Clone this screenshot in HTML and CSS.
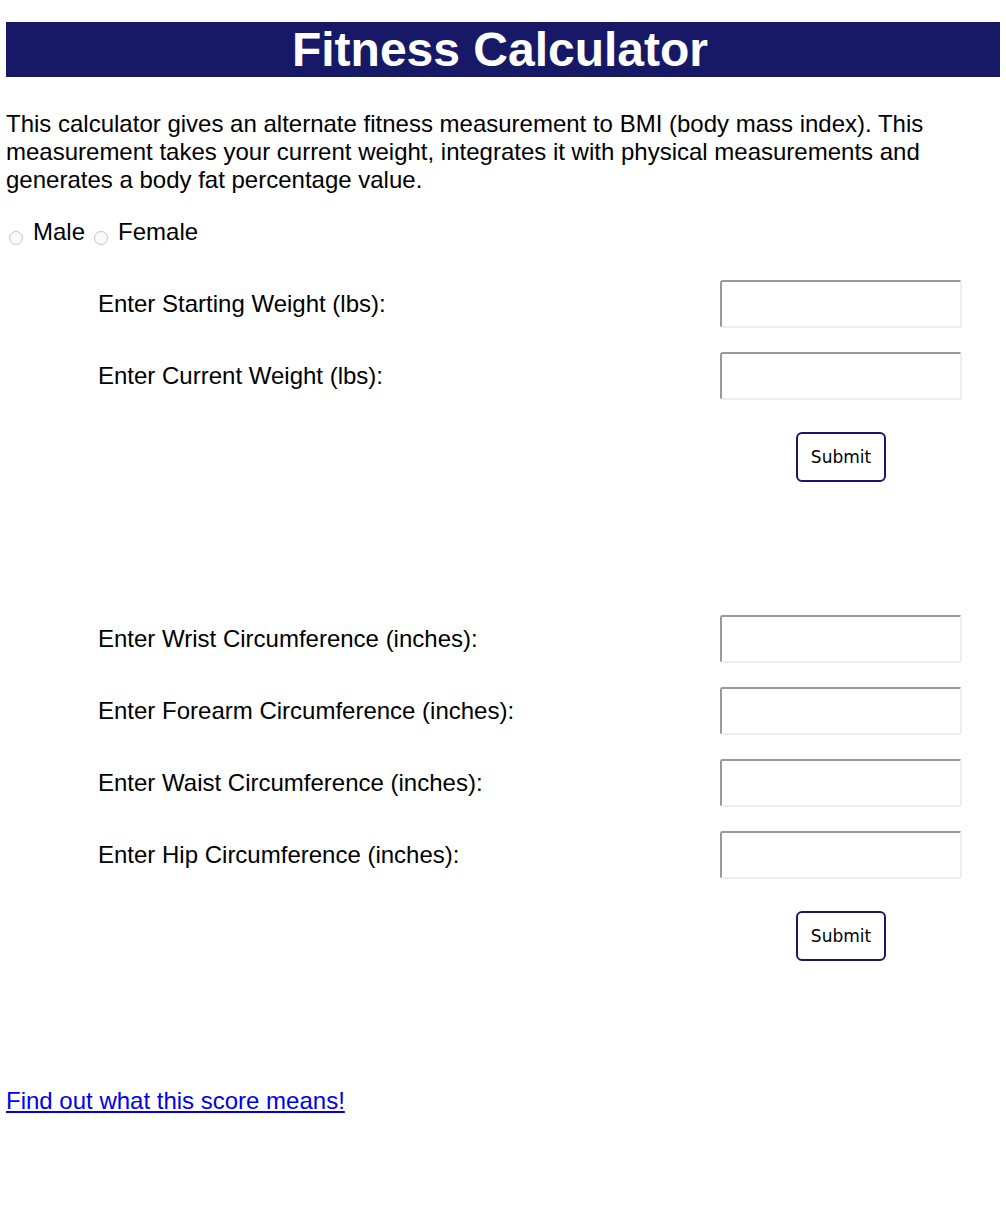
FILE: index.html
```html
<!DOCTYPE html>
<html>
<head>
<meta charset="utf-8">
<link rel="stylesheet" href="styles.css">
</head>
<body>
<header class="banner"><h1 class="title">Fitness Calculator</h1></header>
<p class="intro">This calculator gives an alternate fitness measurement to BMI (body mass index). This measurement takes your current weight, integrates it with physical measurements and generates a body fat percentage value.</p>
<div class="gender">
  <label class="radio-label"><span class="radio"></span>Male</label>
  <label class="radio-label"><span class="radio"></span>Female</label>
</div>
<form class="calc calc-first">
  <div class="row"><span class="label">Enter Starting Weight (lbs):</span><span class="field"></span></div>
  <div class="row"><span class="label">Enter Current Weight (lbs):</span><span class="field"></span></div>
  <div class="row submit-row"><span></span><div class="btn-cell"><span class="btn">Submit</span></div></div>
</form>
<form class="calc calc-second">
  <div class="row"><span class="label">Enter Wrist Circumference (inches):</span><span class="field"></span></div>
  <div class="row"><span class="label">Enter Forearm Circumference (inches):</span><span class="field"></span></div>
  <div class="row"><span class="label">Enter Waist Circumference (inches):</span><span class="field"></span></div>
  <div class="row"><span class="label">Enter Hip Circumference (inches):</span><span class="field"></span></div>
  <div class="row submit-row"><span></span><div class="btn-cell"><span class="btn">Submit</span></div></div>
</form>
<a class="link" href="#">Find out what this score means!</a>
</body>
</html>
```
FILE: styles.css
```css
html, body {
  margin: 0;
  padding: 0;
  background: #fff;
}
body {
  padding: 22px 6px 0 6px;
  font-family: "Liberation Sans", Arial, sans-serif;
  color: #000;
  font-size: 24px;
  line-height: 28px;
}
.banner {
  background: #171966;
  height: 55px;
  display: flex;
  align-items: center;
  justify-content: center;
  padding-right: 6px;
}
.title {
  margin: 0;
  color: #fff;
  font-size: 48px;
  font-weight: bold;
  line-height: 55px;
}
.intro {
  margin: 33px 0 0 0;
  font-size: 24px;
  line-height: 28px;
  padding-right: 40px;
}
.gender {
  margin-top: 24px;
  display: flex;
  align-items: center;
  height: 28px;
}
.radio-label {
  display: flex;
  align-items: baseline;
  margin-right: 6px;
}
.radio {
  width: 14px;
  height: 14px;
  border: 1.5px solid #c6c6c6;
  border-radius: 50%;
  box-sizing: border-box;
  margin: 0 10px 0 3px;
  position: relative;
  top: 5px;
  background: #fafafa;
}
.calc {
  padding-left: 92px;
  margin-top: 34px;
  display: flex;
  flex-direction: column;
  gap: 24px;
}
.calc-second {
  margin-top: 133px;
}
.row {
  display: grid;
  grid-template-columns: 622px 242px;
  align-items: center;
}
.field {
  display: block;
  height: 48px;
  box-sizing: border-box;
  border: 2px solid #eeeeee;
  border-top-color: #999999;
  border-left-color: #999999;
  border-radius: 3px;
  background: #fff;
}
.submit-row {
  margin-top: 8px;
}
.btn-cell {
  display: flex;
  justify-content: center;
}
.btn {
  width: 90px;
  height: 50px;
  box-sizing: border-box;
  border: 2px solid #171966;
  border-radius: 6px;
  display: flex;
  align-items: center;
  justify-content: center;
  font-family: "DejaVu Sans", "Open Sans", sans-serif;
  font-size: 17px;
  line-height: 20px;
  background: #fff;
}
.link {
  display: inline-block;
  margin-top: 126px;
  color: #0000ee;
  text-decoration: underline;
  font-size: 24px;
}
```
